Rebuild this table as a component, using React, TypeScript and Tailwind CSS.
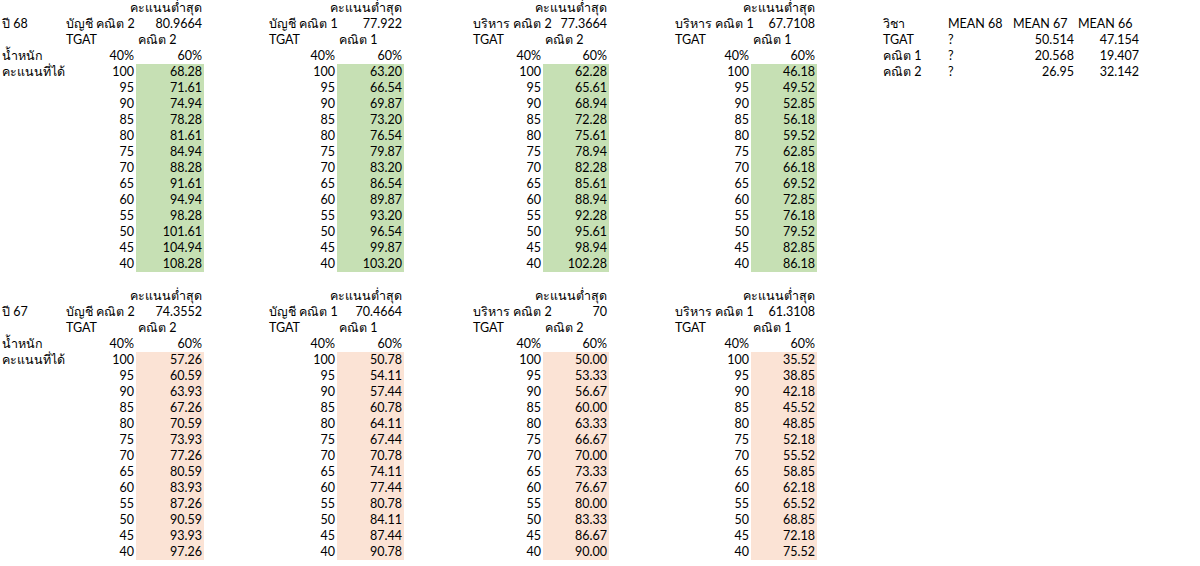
import React from "react";

type Cell = { text?: string; align?: "l" | "r"; fill?: "g" | "o" };

const COLS = 17;
const ROWS = 35;
const weights = [100, 95, 90, 85, 80, 75, 70, 65, 60, 55, 50, 45, 40];

const year68 = [
  { label: "บัญชี คณิต 2", min: "80.9664", subj: "คณิต 2", vals: ["68.28", "71.61", "74.94", "78.28", "81.61", "84.94", "88.28", "91.61", "94.94", "98.28", "101.61", "104.94", "108.28"] },
  { label: "บัญชี คณิต 1", min: "77.922", subj: "คณิต 1", vals: ["63.20", "66.54", "69.87", "73.20", "76.54", "79.87", "83.20", "86.54", "89.87", "93.20", "96.54", "99.87", "103.20"] },
  { label: "บริหาร คณิต 2", min: "77.3664", subj: "คณิต 2", vals: ["62.28", "65.61", "68.94", "72.28", "75.61", "78.94", "82.28", "85.61", "88.94", "92.28", "95.61", "98.94", "102.28"] },
  { label: "บริหาร คณิต 1", min: "67.7108", subj: "คณิต 1", vals: ["46.18", "49.52", "52.85", "56.18", "59.52", "62.85", "66.18", "69.52", "72.85", "76.18", "79.52", "82.85", "86.18"] }
];

const year67 = [
  { label: "บัญชี คณิต 2", min: "74.3552", subj: "คณิต 2", vals: ["57.26", "60.59", "63.93", "67.26", "70.59", "73.93", "77.26", "80.59", "83.93", "87.26", "90.59", "93.93", "97.26"] },
  { label: "บัญชี คณิต 1", min: "70.4664", subj: "คณิต 1", vals: ["50.78", "54.11", "57.44", "60.78", "64.11", "67.44", "70.78", "74.11", "77.44", "80.78", "84.11", "87.44", "90.78"] },
  { label: "บริหาร คณิต 2", min: "70", subj: "คณิต 2", vals: ["50.00", "53.33", "56.67", "60.00", "63.33", "66.67", "70.00", "73.33", "76.67", "80.00", "83.33", "86.67", "90.00"] },
  { label: "บริหาร คณิต 1", min: "61.3108", subj: "คณิต 1", vals: ["35.52", "38.85", "42.18", "45.52", "48.85", "52.18", "55.52", "58.85", "62.18", "65.52", "68.85", "72.18", "75.52"] }
];

function buildSheet(): Cell[][] {
  const g: Cell[][] = Array.from({ length: ROWS }, () => Array.from({ length: COLS }, () => ({})));
  const set = (r: number, c: number, text: string, align: "l" | "r" = "l", fill?: "g" | "o") => {
    g[r][c] = { text, align, fill };
  };

  const section = (top: number, year: string, blocks: typeof year68, fill: "g" | "o") => {
    set(top + 1, 0, year);
    set(top + 3, 0, "น้ำหนัก");
    set(top + 4, 0, "คะแนนที่ได้");
    blocks.forEach((b, i) => {
      const c = 1 + i * 3;
      set(top, c + 1, "คะแนนต่ำสุด", "r");
      set(top + 1, c, b.label);
      set(top + 1, c + 1, b.min, "r");
      set(top + 2, c, "TGAT");
      set(top + 2, c + 1, b.subj);
      set(top + 3, c, "40%", "r");
      set(top + 3, c + 1, "60%", "r");
      weights.forEach((w, j) => {
        set(top + 4 + j, c, String(w), "r");
        set(top + 4 + j, c + 1, b.vals[j], "r", fill);
      });
    });
  };

  section(0, "ปี 68", year68, "g");
  section(18, "ปี 67", year67, "o");

  // mean table
  set(1, 13, "วิชา");
  set(1, 14, "MEAN 68");
  set(1, 15, "MEAN 67");
  set(1, 16, "MEAN 66");
  const means = [
    ["TGAT", "50.514", "47.154"],
    ["คณิต 1", "20.568", "19.407"],
    ["คณิต 2", "26.95", "32.142"]
  ];
  means.forEach((m, i) => {
    set(2 + i, 13, m[0]);
    set(2 + i, 14, "?");
    set(2 + i, 15, m[1], "r");
    set(2 + i, 16, m[2], "r");
  });
  return g;
}

export default function App() {
  const sheet = buildSheet();
  return (
    <div className="h-[566px] w-[1200px] overflow-hidden bg-white text-[12.5px] text-black [font-family:Lato,'Noto_Sans',sans-serif]">
      <div className="grid grid-cols-[64px_72px_68px_63px_70px_67px_67px_72px_66px_64px_78px_66px_64px_65px_65px_65px_65px] auto-rows-[16px]">
        {sheet.flatMap((row, r) =>
          row.map((cell, c) => (
            <div
              key={`${r}-${c}`}
              className={
                "flex h-[16px] items-center whitespace-nowrap px-[2px] leading-[16px] " +
                (cell.align === "r" ? "justify-end " : "justify-start ") +
                (cell.fill === "g" ? "bg-[#c6e0b4]" : cell.fill === "o" ? "bg-[#fbe3d5]" : "")
              }
            >
              {cell.text}
            </div>
          ))
        )}
      </div>
    </div>
  );
}
